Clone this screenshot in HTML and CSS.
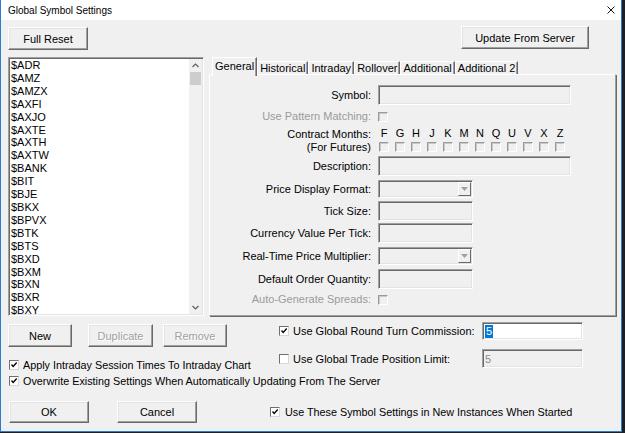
FILE: index.html
```html
<!DOCTYPE html>
<html lang="en">
<head>
    <meta charset="UTF-8">
    <title>Global Symbol Settings</title>
    <link rel="stylesheet" href="styles.css">
</head>
<body>
    <div class="window">
        <!-- Title bar -->
        <div class="titlebar">
            <span class="title">Global Symbol Settings</span>
            <svg class="close" width="8" height="8" viewBox="0 0 8 8">
                <path d="M0.5 0.5 L7.5 7.5 M7.5 0.5 L0.5 7.5" stroke="#111" stroke-width="1" fill="none"/>
            </svg>
        </div>

        <div class="dialog">
            <!-- Top buttons -->
            <div class="top-row">
                <button class="btn btn-reset">Full Reset</button>
                <button class="btn btn-update">Update From Server</button>
            </div>

            <div class="middle">
                <!-- Symbol list -->
                <div class="listbox">
                    <ul class="symbols">
                        <li>$ADR</li>
                        <li>$AMZ</li>
                        <li>$AMZX</li>
                        <li>$AXFI</li>
                        <li>$AXJO</li>
                        <li>$AXTE</li>
                        <li>$AXTH</li>
                        <li>$AXTW</li>
                        <li>$BANK</li>
                        <li>$BIT</li>
                        <li>$BJE</li>
                        <li>$BKX</li>
                        <li>$BPVX</li>
                        <li>$BTK</li>
                        <li>$BTS</li>
                        <li>$BXD</li>
                        <li>$BXM</li>
                        <li>$BXN</li>
                        <li>$BXR</li>
                        <li>$BXY</li>
                    </ul>
                    <div class="scrollbar">
                        <svg class="arrow" width="13" height="13" viewBox="0 0 13 13">
                            <path d="M3.5 8 L6.5 5 L9.5 8" stroke="#606060" stroke-width="1.2" fill="none"/>
                        </svg>
                        <div class="thumb"></div>
                        <div class="track"></div>
                        <svg class="arrow" width="13" height="13" viewBox="0 0 13 13">
                            <path d="M3.5 5 L6.5 8 L9.5 5" stroke="#606060" stroke-width="1.2" fill="none"/>
                        </svg>
                    </div>
                </div>

                <!-- Tab view -->
                <div class="tabview">
                    <div class="tabs">
                        <div class="tab active">General</div>
                        <div class="tab">Historical</div>
                        <div class="tab">Intraday</div>
                        <div class="tab">Rollover</div>
                        <div class="tab">Additional</div>
                        <div class="tab">Additional 2</div>
                    </div>
                    <div class="tab-panel">
                        <div class="form">
                            <div class="label">Symbol:</div>
                            <div class="field wide"></div>

                            <div class="label disabled">Use Pattern Matching:</div>
                            <div><span class="cb off"></span></div>

                            <div class="label">Contract Months:</div>
                            <div class="months">
                                <span>F</span><span>G</span><span>H</span><span>J</span><span>K</span><span>M</span>
                                <span>N</span><span>Q</span><span>U</span><span>V</span><span>X</span><span>Z</span>
                            </div>

                            <div class="label">(For Futures)</div>
                            <div class="months">
                                <span><i class="cb off"></i></span><span><i class="cb off"></i></span><span><i class="cb off"></i></span>
                                <span><i class="cb off"></i></span><span><i class="cb off"></i></span><span><i class="cb off"></i></span>
                                <span><i class="cb off"></i></span><span><i class="cb off"></i></span><span><i class="cb off"></i></span>
                                <span><i class="cb off"></i></span><span><i class="cb off"></i></span><span><i class="cb off"></i></span>
                            </div>

                            <div class="label">Description:</div>
                            <div class="field wide"></div>

                            <div class="label">Price Display Format:</div>
                            <div class="field combo">
                                <span class="combo-btn">
                                    <svg width="7" height="4" viewBox="0 0 7 4"><path d="M0 0 H7 L3.5 4 Z" fill="#a0a0a0"/></svg>
                                </span>
                            </div>

                            <div class="label">Tick Size:</div>
                            <div class="field short"></div>

                            <div class="label">Currency Value Per Tick:</div>
                            <div class="field short"></div>

                            <div class="label">Real-Time Price Multiplier:</div>
                            <div class="field combo">
                                <span class="combo-btn">
                                    <svg width="7" height="4" viewBox="0 0 7 4"><path d="M0 0 H7 L3.5 4 Z" fill="#a0a0a0"/></svg>
                                </span>
                            </div>

                            <div class="label">Default Order Quantity:</div>
                            <div class="field short"></div>

                            <div class="label disabled">Auto-Generate Spreads:</div>
                            <div><span class="cb off"></span></div>
                        </div>
                    </div>
                </div>
            </div>

            <!-- Lower controls -->
            <div class="lower">
                <div class="lower-left">
                    <div class="list-buttons">
                        <button class="btn btn-new">New</button>
                        <button class="btn btn-dup" disabled>Duplicate</button>
                        <button class="btn btn-remove" disabled>Remove</button>
                    </div>
                    <div class="check-row intraday">
                        <span class="cb on"><svg width="8" height="8" viewBox="0 0 8 8"><path d="M1.5 3.5 L3.2 5.5 L6.7 1.5" stroke="#000" stroke-width="1.3" fill="none"/></svg></span>
                        <span>Apply Intraday Session Times To Intraday Chart</span>
                    </div>
                </div>
                <div class="lower-right">
                    <div class="global-row commission">
                        <span class="cb on"><svg width="8" height="8" viewBox="0 0 8 8"><path d="M1.5 3.5 L3.2 5.5 L6.7 1.5" stroke="#000" stroke-width="1.3" fill="none"/></svg></span>
                        <span class="global-label">Use Global Round Turn Commission:</span>
                        <div class="field value-box white"><span class="sel">5</span></div>
                    </div>
                    <div class="global-row limit">
                        <span class="cb on"></span>
                        <span class="global-label">Use Global Trade Position Limit:</span>
                        <div class="field value-box"><span class="grey">5</span></div>
                    </div>
                </div>
            </div>

            <div class="check-row overwrite">
                <span class="cb on"><svg width="8" height="8" viewBox="0 0 8 8"><path d="M1.5 3.5 L3.2 5.5 L6.7 1.5" stroke="#000" stroke-width="1.3" fill="none"/></svg></span>
                <span>Overwrite Existing Settings When Automatically Updating From The Server</span>
            </div>

            <div class="bottom-row">
                <button class="btn btn-ok">OK</button>
                <button class="btn btn-cancel">Cancel</button>
                <div class="check-row new-instances">
                    <span class="cb on"><svg width="8" height="8" viewBox="0 0 8 8"><path d="M1.5 3.5 L3.2 5.5 L6.7 1.5" stroke="#000" stroke-width="1.3" fill="none"/></svg></span>
                    <span>Use These Symbol Settings in New Instances When Started</span>
                </div>
            </div>
        </div>
    </div>
</body>
</html>
```

FILE: styles.css
```css
/* Page and window frame */
body {
    margin: 0;
    background: #1c1f24;
    font-family: "Liberation Sans", Arial, sans-serif;
    font-size: 11px;
    color: #000;
}

.window {
    width: 622px;
    height: 432px;
    box-sizing: border-box;
    border: 1px solid #2d7cc9;
    border-top: none;
    background: #f0f0f0;
    display: flex;
    flex-direction: column;
}

/* Title bar */
.titlebar {
    height: 20px;
    flex-shrink: 0;
    background: #fff;
    display: flex;
    align-items: center;
    justify-content: space-between;
    padding: 0 6px 0 7px;
}

.title {
    font-size: 10px;
}

.dialog {
    flex: 1;
    padding: 6px 0 0 7px;
}

/* Buttons (classic 3D look) */
.btn {
    box-sizing: border-box;
    height: 23px;
    padding: 0;
    font: inherit;
    color: #000;
    background: #f0f0f0;
    border: 1px solid;
    border-color: #fff #696969 #696969 #fff;
    box-shadow: inset -1px -1px 0 #a0a0a0, inset 1px 1px 0 #e3e3e3;
}

.btn:disabled {
    color: #a0a0a0;
    text-shadow: 1px 1px 0 #fff;
}

/* Sunken fields */
.field {
    box-sizing: border-box;
    height: 20px;
    border: 1px solid;
    border-color: #a0a0a0 #fff #fff #a0a0a0;
    box-shadow: inset 1px 1px 0 #696969, inset -1px -1px 0 #e3e3e3;
    background: #f0f0f0;
}

.top-row {
    display: flex;
    align-items: flex-start;
}

.btn-reset {
    width: 80px;
    margin-top: 1px;
}

.btn-update {
    width: 128px;
    margin-left: 373px;
}

/* List and tabs */
.middle {
    display: flex;
    margin-top: 7px;
    height: 259px;
}

.listbox {
    width: 196px;
    box-sizing: border-box;
    display: flex;
    background: #fff;
    border: 1px solid;
    border-color: #a0a0a0 #fff #fff #a0a0a0;
    box-shadow: inset 1px 1px 0 #696969, inset -1px -1px 0 #e3e3e3;
}

.symbols {
    flex: 1;
    list-style: none;
    margin: 0;
    padding: 1px 0 0 2px;
    overflow: hidden;
}

.symbols li {
    line-height: 12.9px;
}

.scrollbar {
    width: 13px;
    margin: 1px 1px 1px 0;
    background: #f0f0f0;
    display: flex;
    flex-direction: column;
}

.arrow {
    display: block;
    flex-shrink: 0;
}

.thumb {
    height: 13px;
    background: #cdcdcd;
    margin: 0 1px;
}

.track {
    flex: 1;
}

.tabview {
    width: 408px;
    margin-left: 5px;
    display: flex;
    flex-direction: column;
}

.tabs {
    height: 17px;
    display: flex;
    align-items: flex-end;
    padding-left: 3px;
}

.tab {
    height: 12px;
    line-height: 12px;
    padding: 0 2px;
    border: 1px solid;
    border-color: #fff #696969 transparent #fff;
    border-bottom: none;
    box-shadow: inset -1px 0 0 #a0a0a0;
    white-space: nowrap;
}

.tab.active {
    box-sizing: border-box;
    height: 19px;
    padding-top: 2px;
    margin-bottom: -2px;
    position: relative;
    z-index: 1;
    background: #f0f0f0;
}

.tab-panel {
    flex: 1;
    box-sizing: border-box;
    border: 1px solid;
    border-color: #fff #a0a0a0 #a0a0a0 #fff;
    box-shadow: 1px 1px 0 #696969;
    margin-right: 1px;
}

/* General tab form */
.form {
    display: grid;
    grid-template-columns: 161px 1fr;
    grid-template-rows: 21px 22px 13px 13px 25px 21px 23px 22px 23px 23px 18px;
    column-gap: 7px;
    align-items: center;
    padding-top: 9px;
}

.label {
    text-align: right;
    white-space: nowrap;
}

.disabled {
    color: #9b9b9b;
}

.wide {
    width: 193px;
}

.short {
    width: 95px;
}

.combo {
    width: 95px;
    height: 18px;
    display: flex;
    justify-content: flex-end;
    padding: 1px;
}

.combo-btn {
    width: 13px;
    box-sizing: border-box;
    border: 1px solid;
    border-color: #fff #696969 #696969 #fff;
    display: flex;
    align-items: center;
    justify-content: center;
}

.months {
    display: grid;
    grid-template-columns: repeat(12, 16px);
    line-height: 13px;
}

.months span {
    width: 12px;
    text-align: center;
    display: flex;
    justify-content: center;
}

/* Checkboxes */
.cb {
    display: inline-flex;
    align-items: center;
    justify-content: center;
    width: 10px;
    height: 10px;
    box-sizing: border-box;
    border: 1px solid;
    vertical-align: middle;
    flex-shrink: 0;
}

.cb.off {
    border-color: #9a9a9a #fff #fff #9a9a9a;
    box-shadow: inset 1px 1px 0 #c8c8c8;
    background: #f0f0f0;
}

.cb.on {
    border-color: #6f6f6f #d8d8d8 #d8d8d8 #6f6f6f;
    background: #fff;
}

.check-row {
    display: flex;
    align-items: center;
    gap: 4px;
    height: 12px;
    white-space: nowrap;
    font-size: 10.8px;
}

/* Lower section */
.lower {
    display: flex;
    height: 55px;
}

.lower-left {
    width: 271px;
}

.list-buttons {
    display: flex;
    margin-top: 8px;
}

.btn-new {
    width: 64px;
}

.btn-dup {
    width: 65px;
    margin-left: 16px;
}

.btn-remove {
    width: 64px;
    margin-left: 10px;
}

.intraday {
    margin-top: 12px;
    padding-left: 1px;
}

.global-row {
    display: flex;
    align-items: center;
}

.global-row .cb {
    margin-right: 4px;
}

.global-label {
    width: 189px;
    white-space: nowrap;
}

.commission {
    margin-top: 6px;
    height: 18px;
}

.limit {
    margin-top: 9px;
    height: 19px;
}

.value-box {
    width: 101px;
    height: 100%;
    padding-left: 2px;
    display: flex;
    align-items: center;
}

.value-box.white {
    background: #fff;
}

.sel {
    background: #0078d7;
    color: #fff;
    padding: 0 1px;
    line-height: 13px;
}

.grey {
    color: #8c8c8c;
}

.overwrite {
    margin-top: 4px;
    padding-left: 1px;
}

.bottom-row {
    display: flex;
    align-items: center;
    margin-top: 14px;
    height: 22px;
}

.btn-ok {
    width: 80px;
    height: 22px;
    margin-left: 1px;
}

.btn-cancel {
    width: 80px;
    height: 22px;
    margin-left: 28px;
}

.new-instances {
    margin-left: 73px;
    gap: 5px;
}
```
